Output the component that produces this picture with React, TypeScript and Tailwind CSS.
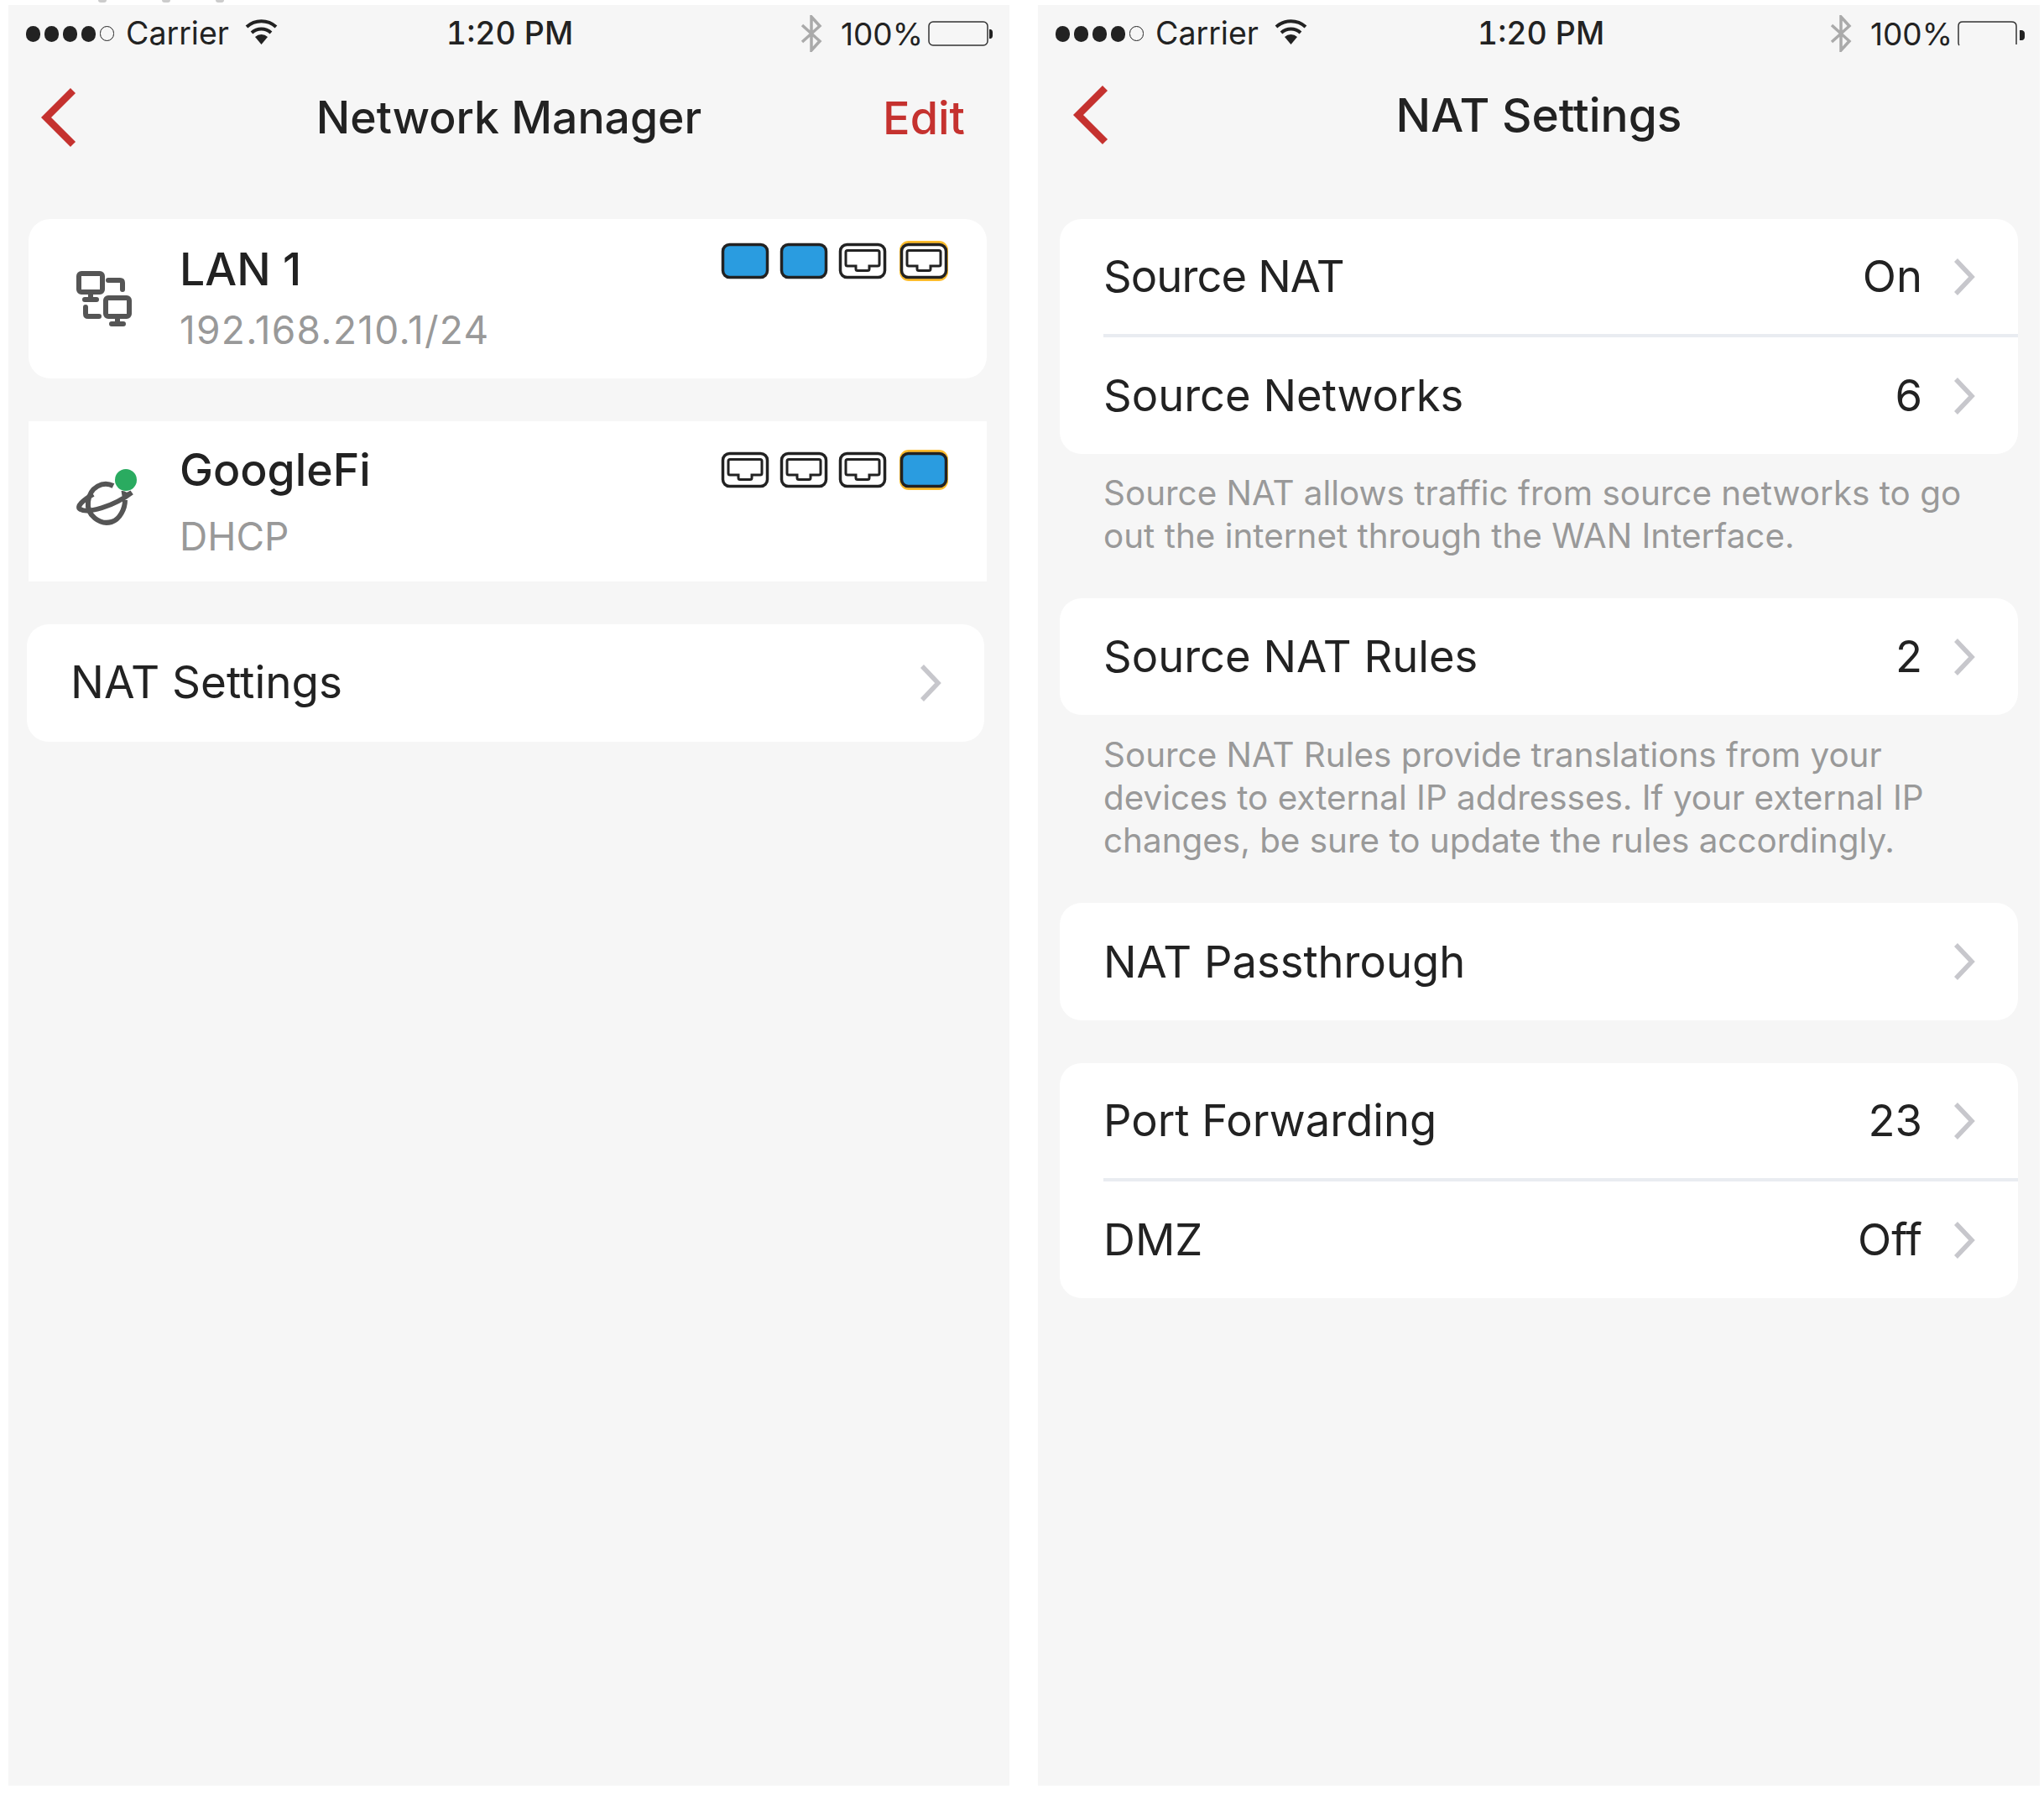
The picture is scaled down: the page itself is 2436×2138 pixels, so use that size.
import type { ReactNode } from 'react';

function Back() {
  return (
    <svg width="44" height="70" viewBox="0 0 44 70" className="block">
      <polyline points="40,3 8,35 40,67" fill="none" stroke="#c5322f" strokeWidth="8.5" />
    </svg>
  );
}

function Chevron() {
  return (
    <svg width="28" height="44" viewBox="0 0 28 44" className="block shrink-0">
      <polyline points="4,2 23,22 4,42" fill="none" stroke="#c7c7cc" strokeWidth="5.5" />
    </svg>
  );
}

function Wifi() {
  return (
    <svg width="39" height="30" viewBox="0 0 39 30" className="block">
      <path d="M2 9 A26 26 0 0 1 37 9" fill="none" stroke="#222" strokeWidth="4" />
      <path d="M8 16 A17 17 0 0 1 31 16" fill="none" stroke="#222" strokeWidth="4" />
      <path d="M12 21 A11 11 0 0 1 27 21 L19.5 30 Z" fill="#222" />
    </svg>
  );
}

function Bluetooth() {
  return (
    <svg width="26" height="44" viewBox="0 0 26 44" className="block">
      <polyline points="2,12 23,31 13,42 13,2 23,13 2,32" fill="none" stroke="#aaa" strokeWidth="3.5" />
    </svg>
  );
}

function Battery({ broken }: { broken?: boolean }) {
  if (broken) {
    return (
      <svg width="82" height="30" viewBox="0 0 82 30" className="block">
        <path d="M2 29 Q1 28 1 26 V6 Q1 1 6 1 H64 Q70 1 70 6 V28" fill="none" stroke="#333" strokeWidth="1.5" />
        <path d="M74 11 H77 Q80 12 80 15 V19 Q80 22 77 23 H74 Z" fill="#222" />
      </svg>
    );
  }
  return (
    <svg width="78" height="30" viewBox="0 0 78 30" className="block">
      <rect x="1" y="1" width="70" height="28" rx="5" fill="none" stroke="#333" strokeWidth="1.5" />
      <path d="M73 10 H75 Q77 11 77 13 V18 Q77 20 75 21 H73 Z" fill="#222" />
    </svg>
  );
}

function SignalDots() {
  return (
    <div className="flex items-center gap-[5px]">
      <div className="h-[19px] w-[17px] rounded-full bg-[#222]" />
      <div className="h-[19px] w-[17px] rounded-full bg-[#222]" />
      <div className="h-[19px] w-[17px] rounded-full bg-[#222]" />
      <div className="h-[19px] w-[17px] rounded-full bg-[#222]" />
      <div className="h-[18px] w-[17px] rounded-full border border-[#222]" />
    </div>
  );
}

function StatusBar({ broken }: { broken?: boolean }) {
  return (
    <div className={`grid h-[68px] grid-cols-[1fr_auto_1fr] items-center pl-[21px] ${broken ? 'pr-[16px]' : 'pr-[19px]'}`}>
      <div className="flex items-center">
        <SignalDots />
        <span className="ml-[14px] text-[37.5px] leading-none text-[#222]">Carrier</span>
        <div className="ml-[19px] -translate-y-[2px]"><Wifi /></div>
      </div>
      <span className="text-[37.5px] leading-none font-medium text-[#222] tabular-nums">1:20 PM</span>
      <div className="flex items-center justify-end">
        <Bluetooth />
        <span className="mr-[6px] ml-[22px] text-[37px] leading-none text-[#222]">100%</span>
        <Battery broken={broken} />
      </div>
    </div>
  );
}

function Port({ on, ring }: { on?: boolean; ring?: boolean }) {
  return (
    <svg width="60" height="50" viewBox="0 0 60 50" className="block shrink-0 overflow-visible">
      {ring && <rect x="1" y="1" width="58" height="48" rx="11" fill="#fcbc2c" />}
      <rect x="3.5" y="5.5" width="53" height="39" rx="8" fill={on ? '#2a9ce0' : '#fff'} stroke="#222" strokeWidth="3.5" />
      {!on && (
        <path
          d="M12 12.5 H48 Q50 12.5 50 14.5 V29 Q50 31 48 31 H38 V34.5 Q38 36.5 36 36.5 H24 Q22 36.5 22 34.5 V31 H12 Q10 31 10 29 V14.5 Q10 12.5 12 12.5 Z"
          fill="none"
          stroke="#222"
          strokeWidth="3"
        />
      )}
    </svg>
  );
}

function Ports({ on, ring }: { on: boolean[]; ring: number }) {
  return (
    <div className="flex items-center gap-[10px]">
      {on.map((v, i) => (
        <div key={i} className={i === ring ? 'ml-[3px]' : ''}>
          <Port on={v} ring={i === ring} />
        </div>
      ))}
    </div>
  );
}

function LanIcon() {
  return (
    <svg width="66" height="66" viewBox="0 0 66 66" className="block">
      <g fill="none" stroke="#555" strokeWidth="6" strokeLinecap="round" strokeLinejoin="round">
        <rect x="3" y="3" width="28" height="22" rx="3" />
        <path d="M17 25 V33 M10 34 H24" />
        <rect x="35" y="32" width="28" height="22" rx="3" />
        <path d="M49 54 V62 M42 63 H56" />
        <path d="M38 11 H52 Q55 11 55 14 V22" />
        <path d="M11 43 V51 Q11 54 14 54 H27" />
      </g>
    </svg>
  );
}

function WanIcon() {
  return (
    <svg width="74" height="66" viewBox="0 0 74 66" className="block overflow-visible">
      <path d="M44 17 C32 11 16 18 14 36 C12 52 28 64 42 60 C52 57 58 44 58 34" fill="none" stroke="#555" strokeWidth="6" />
      <path d="M20 27 C8 34 -1 42 5 45 C13 50 44 42 66 25 C56 31 60 25 54 26" fill="none" stroke="#555" strokeWidth="6" />
      <circle cx="59" cy="10" r="13" fill="#2aab60" />
    </svg>
  );
}

function NetworkCard({ icon, name, sub, on, ring, rounded }: { icon: ReactNode; name: string; sub: string; on: boolean[]; ring: number; rounded?: boolean }) {
  return (
    <div className={`relative flex items-start bg-white pl-[57px] ${rounded ? 'h-[190px] rounded-[26px] pt-[29px]' : 'h-[191px] pt-[27px]'}`}>
      <div className="w-[123px] pt-[33px]">{icon}</div>
      <div>
        <div className="text-[53.5px] leading-[62px] font-medium text-[#222]">{name}</div>
        <div className={`text-[46px] leading-[62px] text-[#999] ${rounded ? 'mt-[10px] tracking-[1.3px]' : 'mt-[17px]'}`}>{sub}</div>
      </div>
      <div className={`absolute right-[45px] ${rounded ? 'top-[25px]' : 'top-[33px]'}`}>
        <Ports on={on} ring={ring} />
      </div>
    </div>
  );
}

function Row({ label, value, h = 'h-[139px]', tight }: { label: string; value?: string; h?: string; tight?: boolean }) {
  return (
    <div className={`flex items-center pr-[50px] pl-[52px] ${h}`}>
      <span className={`flex-1 text-[52.5px] text-[#222] ${tight ? 'tracking-[-0.9px]' : ''}`}>{label}</span>
      {value && <span className="mr-[36px] text-[52.5px] text-[#222]">{value}</span>}
      <Chevron />
    </div>
  );
}

function Card({ children }: { children: ReactNode }) {
  return <div className="overflow-hidden rounded-[26px] bg-white">{children}</div>;
}

function Divider() {
  return <div className="ml-[52px] h-[4px] bg-[#e9ecf1]" />;
}

function Note({ children, className }: { children: ReactNode; className: string }) {
  return <p className={`pr-[40px] pl-[52px] text-[40.4px] leading-[51px] text-[#999] ${className}`}>{children}</p>;
}

function NetworkManager() {
  return (
    <div className="h-[2122px] w-[1193px] bg-[#f6f6f6]">
      <StatusBar />
      <div className="grid h-[132px] grid-cols-[1fr_auto_1fr] items-center px-[37px]">
        <Back />
        <span className="text-[53.5px] font-medium text-[#222]">Network Manager</span>
        <span className="pr-[16px] text-right text-[54px] font-medium text-[#c5322f]">Edit</span>
      </div>
      <div className="mt-[55px] ml-[24px] flex w-[1142px] flex-col gap-[51px]">
        <NetworkCard icon={<LanIcon />} name="LAN 1" sub="192.168.210.1/24" on={[true, true, false, false]} ring={3} rounded />
        <NetworkCard icon={<WanIcon />} name="GoogleFi" sub="DHCP" on={[false, false, false, true]} ring={3} />
        <div className="-ml-[2px] flex h-[140px] w-[1141px] items-center rounded-[26px] bg-white pr-[50px] pl-[52px]">
          <span className="flex-1 text-[53px] text-[#222]">NAT Settings</span>
          <Chevron />
        </div>
      </div>
    </div>
  );
}

function NatSettings() {
  return (
    <div className="h-[2122px] w-[1194px] bg-[#f6f6f6]">
      <StatusBar broken />
      <div className="grid h-[126px] grid-cols-[1fr_auto_1fr] items-center px-[40px]">
        <Back />
        <span className="text-[55px] font-medium text-[#222]">NAT Settings</span>
        <span />
      </div>
      <div className="mx-[26px] mt-[61px]">
        <Card>
          <Row label="Source NAT" value="On" h="h-[137px]" tight />
          <Divider />
          <Row label="Source Networks" value="6" />
        </Card>
        <Note className="pt-[21px] pb-[49px]">Source NAT allows traffic from source networks to go out the internet through the WAN Interface.</Note>
        <Card>
          <Row label="Source NAT Rules" value="2" />
        </Card>
        <Note className="pt-[22px] pb-[49px]">Source NAT Rules provide translations from your devices to external IP addresses. If your external IP changes, be sure to update the rules accordingly.</Note>
        <Card>
          <Row label="NAT Passthrough" h="h-[140px]" />
        </Card>
        <div className="mt-[51px]">
          <Card>
            <Row label="Port Forwarding" value="23" h="h-[137px]" />
            <Divider />
            <Row label="DMZ" value="Off" />
          </Card>
        </div>
      </div>
    </div>
  );
}

export default function App() {
  return (
    <div className="min-h-screen bg-white font-['Inter','Liberation_Sans',sans-serif]">
      <div className="flex h-[6px] items-start pl-[117px]">
        <div className="h-[3px] w-[10px] rounded-b-full bg-[#ccc]" />
        <div className="ml-[66px] h-[3px] w-[10px] rounded-b-full bg-[#ccc]" />
        <div className="ml-[54px] h-[3px] w-[10px] rounded-b-full bg-[#ccc]" />
      </div>
      <div className="flex gap-[34px] pl-[10px]">
        <NetworkManager />
        <NatSettings />
      </div>
    </div>
  );
}
